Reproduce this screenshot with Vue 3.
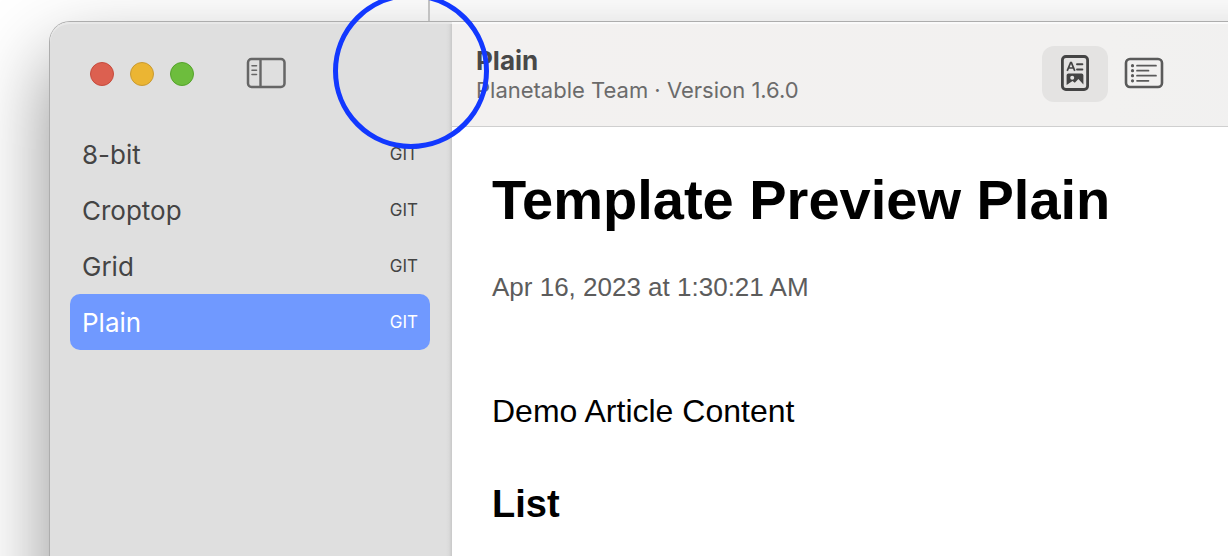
<script setup>
import { ref } from 'vue'

const templates = ['8-bit', 'Croptop', 'Grid', 'Plain']
const selected = ref('Plain')
const view = ref('preview')
</script>

<template>
  <div class="desktop">
    <div class="divider"></div>
    <div class="window">
      <aside class="sidebar">
        <div class="titlebar">
          <button class="light red" aria-label="Close"></button>
          <button class="light yellow" aria-label="Minimize"></button>
          <button class="light green" aria-label="Zoom"></button>
          <button class="toggle" aria-label="Toggle sidebar">
            <svg width="40" height="32" viewBox="0 0 40 32" fill="none" stroke="#666">
              <rect x="2" y="2" width="36.500" height="28" rx="3.5" stroke-width="2.5" />
              <path d="M14.5 2v28" stroke-width="2.4" />
              <path d="M6 8.7h4.5M6 13.2h4.5M6 17.5h4.5" stroke-width="1.6" stroke-linecap="round" />
            </svg>
          </button>
        </div>
        <nav class="list">
          <button
            v-for="name in templates"
            :key="name"
            class="row"
            :class="{ active: name === selected }"
            @click="selected = name"
          >
            <span class="label">{{ name }}</span>
            <span class="tag">GIT</span>
          </button>
        </nav>
      </aside>
      <main class="main">
        <header class="toolbar">
          <div class="heading">
            <div class="name">Plain</div>
            <div class="info">Planetable Team · Version 1.6.0</div>
          </div>
          <div class="views">
            <button class="view" :class="{ on: view === 'preview' }" aria-label="Preview" @click="view = 'preview'">
              <svg width="28" height="36" viewBox="0 0 28 36" fill="none" stroke="#444">
                <rect x="1.4" y="1.5" width="25.2" height="33" rx="3.5" stroke-width="2.8" />
                <path d="M6.2 15.8 9.6 7.6h.8L13.8 15.8M7.6 13h4.8" stroke-width="1.7" />
                <path d="M16 9.3h5.4M16 14.5h5.4" stroke-width="1.9" stroke-linecap="round" />
                <path
                  fill="#444"
                  stroke="none"
                  fill-rule="evenodd"
                  d="M7.4 18.4h13.200q1.800 0 1.800 1.800v9.200l-5-5.400-3.600 3.700-2.300-1.600-5.900 3.800V20.200Q5.600 18.400 7.400 18.400zM11.200 20.700a2 2 0 1 0 0 4 2 2 0 0 0 0-4z"
                />
              </svg>
            </button>
            <button class="view" :class="{ on: view === 'list' }" aria-label="List" @click="view = 'list'">
              <svg width="40" height="32" viewBox="0 0 40 32" fill="none" stroke="#5a5a5a">
                <rect x="2" y="2" width="36" height="28" rx="4" stroke-width="2.6" />
                <path d="M13 8.7h19M13 13.7h11.5M13 18.7h19M13 23.8h11.5" stroke-width="1.7" stroke-linecap="round" />
                <path d="M8.5 8.7h.01M8.5 13.7h.01M8.5 18.7h.01M8.5 23.8h.01" stroke-width="3.2" stroke-linecap="round" />
              </svg>
            </button>
          </div>
        </header>
        <article class="article">
          <h1>Template Preview Plain</h1>
          <p class="date">Apr 16, 2023 at 1:30:21 AM</p>
          <p class="text">Demo Article Content</p>
          <h2>List</h2>
        </article>
      </main>
    </div>
    <div class="ring"></div>
  </div>
</template>

<style>
body {
  margin: 0;
  background: #fff;
}
</style>

<style scoped>
.desktop {
  position: relative;
  box-sizing: border-box;
  min-height: 100vh;
  padding: 22px 0 0 50px;
  display: flex;
  overflow: hidden;
  font-family: Inter, "Liberation Sans", sans-serif;
}
button {
  padding: 0;
  border: 0;
  background: none;
  font: inherit;
  color: inherit;
}
svg {
  display: block;
}
.divider {
  position: absolute;
  top: 0;
  left: 428px;
  width: 2px;
  height: 21px;
  background: #c2c2c2;
}
.window {
  flex: 1;
  display: flex;
  margin: 0 -160px -160px 0;
  padding-right: 160px;
  background: #f2f1f0;
  border-top-left-radius: 20px;
  box-shadow: 0 0 0 1px #adadad, 0 36px 80px rgba(0, 0, 0, 0.45);
}
.sidebar {
  flex: none;
  box-sizing: border-box;
  width: 402px;
  padding: 0 22px 0 20px;
  background: linear-gradient(to left, #c8c8c8, #dadada 3px, #dfdfdf 6px);
  border-top-left-radius: 20px;
  box-shadow: inset 0 2px 0 #e8e8e8;
}
.titlebar {
  display: flex;
  align-items: center;
  gap: 16px;
  height: 104px;
  padding-left: 20px;
}
.light {
  width: 24px;
  height: 24px;
  border: 1px solid;
  border-radius: 50%;
}
.red {
  background: #dc6050;
  border-color: #c64b3d;
}
.yellow {
  background: #ebb533;
  border-color: #c99a32;
}
.green {
  background: #6dbd3d;
  border-color: #55a32b;
}
.toggle {
  margin-left: 36px;
  padding-bottom: 2px;
}
.list {
  display: flex;
  flex-direction: column;
}
.row {
  display: flex;
  align-items: center;
  justify-content: space-between;
  height: 56px;
  padding: 0 12px;
  border-radius: 10px;
  font-size: 26px;
  line-height: 32px;
  color: #444;
}
.label {
  padding-top: 2px;
}
.tag {
  font-size: 17px;
}
.active {
  background: #7099ff;
  color: #fff;
}
.main {
  flex: 1;
  min-width: 0;
  margin-right: -160px;
  padding-right: 160px;
  background: #fff;
}
.toolbar {
  display: flex;
  align-items: center;
  justify-content: space-between;
  box-sizing: border-box;
  height: 105px;
  margin-right: -160px;
  padding: 0 211px 0 24px;
  background: linear-gradient(to right, #f3f1f0, #f2f1f0 70%, #f0f0f0);
  border-bottom: 1px solid #cfcfcf;
  box-shadow: inset 0 2px 0 #fafafa;
}
.heading {
  padding-top: 2px;
}
.name {
  font-size: 26px;
  font-weight: 700;
  line-height: 30px;
  color: #484848;
}
.info {
  font-size: 22px;
  line-height: 28px;
  color: #6b6b6b;
}
.views {
  display: flex;
  align-items: center;
  gap: 3px;
}
.view {
  display: flex;
  align-items: center;
  justify-content: center;
  width: 66px;
  height: 56px;
  border-radius: 12px;
}
.view svg {
  margin-bottom: 2px;
}
.on {
  background: #e4e3e2;
}
.article {
  padding: 39px 40px 0;
  font-family: "Liberation Sans", Arial, sans-serif;
  color: #000;
}
h1,
h2,
p {
  margin: 0;
}
h1 {
  font-size: 56px;
  line-height: 68px;
}
.date {
  margin-top: 37px;
  font-size: 26px;
  line-height: 32px;
  color: #5c5c5c;
}
.text {
  margin-top: 88px;
  font-size: 32px;
  line-height: 40px;
}
h2 {
  margin-top: 49px;
  font-size: 38px;
  line-height: 48px;
}
.ring {
  position: absolute;
  top: -7px;
  left: 333px;
  box-sizing: border-box;
  width: 156px;
  height: 156px;
  border: 5px solid #1238ff;
  border-radius: 50%;
  pointer-events: none;
}
</style>
